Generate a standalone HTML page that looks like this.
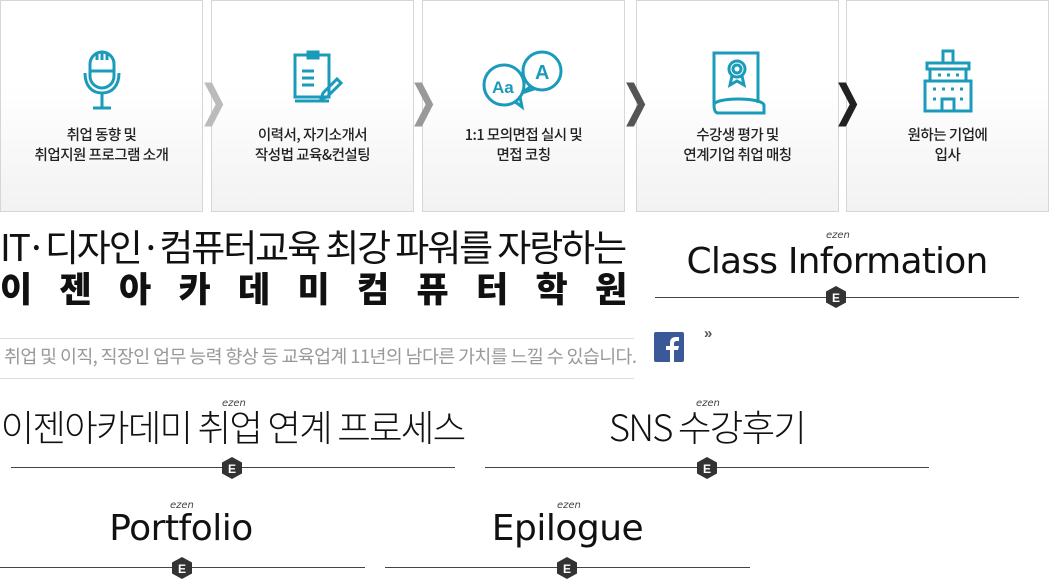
<!DOCTYPE html>
<html><head><meta charset="utf-8"><style>
*{margin:0;padding:0;box-sizing:border-box}
body{width:1049px;height:583px;background:#fff;position:relative;overflow:hidden;font-family:"Liberation Sans","Noto Sans CJK KR",sans-serif;color:#111}
.a{position:absolute}
.box{position:absolute;top:0;width:203px;height:212px;border:1px solid #d6d6d6;background:linear-gradient(#fff 40%,#f2f2f2)}
.box .t{position:absolute;top:124px;left:0;width:100%;text-align:center;font-size:14.5px;line-height:20px;color:#222;font-weight:500;font-family:"Noto Sans CJK KR",sans-serif;letter-spacing:-0.5px}
.box svg{position:absolute;left:50%;top:48px;transform:translateX(-50%)}
.chev{position:absolute;top:80px;font-size:44px;font-family:"DejaVu Sans",sans-serif;line-height:44px;transform:scaleX(0.8);font-weight:bold}
.k{font-family:"Noto Sans CJK KR",sans-serif}
.ttl{position:absolute;text-align:center;font-weight:300;color:#111;white-space:nowrap}
.ez{position:absolute;font-size:10px;font-style:italic;color:#444;font-family:"DejaVu Sans",sans-serif}
.ln{position:absolute;height:1px;background:#444}
.bd{position:absolute;width:20px;height:22px}
</style></head><body>

<div class="box" style="left:0">
<svg width="40" height="64" viewBox="0 0 40 64" fill="none" stroke="#1b9bba" stroke-width="3"><rect x="8" y="3" width="24" height="36" rx="12"/><path d="M8 22h24M15 5v6M20 4v7M25 5v6"/><path d="M3 24c0 13 7 20 17 20s17-7 17-20"/><path d="M20 44v14M11 59h18"/></svg>
<div class="t">취업 동향 및<br>취업지원 프로그램 소개</div></div>
<div class="box" style="left:211px">
<svg width="60" height="60" viewBox="0 0 60 60" fill="none" stroke="#1b9bba" stroke-width="3"><path d="M12 6h34v42H12z"/><rect x="25" y="3" width="10" height="6"/><path d="M12 52h34M19 22h12M19 29h12M19 36h12"/><path d="M40 44l14-14 4 4-14 14-6 2z"/></svg>
<div class="t">이력서, 자기소개서<br>작성법 교육&amp;컨설팅</div></div>
<div class="box" style="left:422px">
<svg width="84" height="64" viewBox="0 0 84 64" fill="none" stroke="#1b9bba" stroke-width="3"><circle cx="22" cy="36" r="20"/><path d="M32 52l8 6-2-10"/><circle cx="60" cy="22" r="19"/><path d="M48 38l-8 6 12-4"/><text x="10" y="44" font-size="17" fill="#1b9bba" stroke="none" font-weight="bold" font-family="Liberation Sans">Aa</text><text x="53" y="30" font-size="20" fill="#1b9bba" stroke="none" font-weight="bold" font-family="Liberation Sans">A</text></svg>
<div class="t">1:1 모의면접 실시 및<br>면접 코칭</div></div>
<div class="box" style="left:636px">
<svg width="56" height="68" viewBox="0 0 56 68" fill="none" stroke="#1b9bba" stroke-width="3"><path d="M4 56V4h44v50"/><path d="M4 56c0-8 48-8 50 0v8H8c-3 0-4-4-4-8z"/><circle cx="27" cy="20" r="8"/><circle cx="27" cy="20" r="4"/><path d="M22 27l-2 9 7-4 7 4-2-9"/></svg>
<div class="t">수강생 평가 및<br>연계기업 취업 매칭</div></div>
<div class="box" style="left:846px">
<svg width="50" height="64" viewBox="0 0 50 64" fill="none" stroke="#1b9bba" stroke-width="3"><path d="M20 2h10v12H20z"/><path d="M4 14h42v6H4z"/><path d="M7 20v12M43 20v12"/><path d="M2 32h46v30H2z"/><path d="M19 62V50h12v12" /><g stroke-width="3"><path d="M15 26h3M24 26h3M33 26h3M10 40h3M19 40h3M28 40h3M37 40h3M10 50h3M37 50h3"/></g></svg>
<div class="t">원하는 기업에<br>입사</div></div>

<div class="chev" style="left:195px;color:#bbb">❯</div>
<div class="chev" style="left:405px;color:#999">❯</div>
<div class="chev" style="left:617px;color:#555">❯</div>
<div class="chev" style="left:829px;color:#222">❯</div>

<div class="a k" style="left:0;top:220px;font-size:37px;letter-spacing:-2.1px;font-weight:400;white-space:nowrap;line-height:50px">IT·디자인·컴퓨터교육 최강 파워를 자랑하는</div>
<div class="a k" style="left:0;top:264px;font-size:35px;font-weight:900;letter-spacing:27.3px;white-space:nowrap;line-height:48px">이젠아카데미컴퓨터학원</div>
<div class="a" style="left:0;top:338px;width:634px;height:1px;background:#ddd"></div>
<div class="a" style="left:0;top:378px;width:634px;height:1px;background:#ddd"></div>
<div class="a k" style="left:4px;top:343px;font-size:18.4px;color:#999;white-space:nowrap;letter-spacing:-0.6px;font-weight:400">취업 및 이직, 직장인 업무 능력 향상 등 교육업계 11년의 남다른 가치를 느낄 수 있습니다.</div>

<svg class="a" style="left:654px;top:332px" width="30" height="30"><rect width="30" height="30" rx="2" fill="#3b5998"/><path d="M16 30V18h-4v-4h4v-3c0-4 2-6 6-6h3v4h-2c-2 0-3 1-3 2.5V14h5l-1 4h-4v12z" fill="#fff"/></svg>
<div class="a" style="left:704px;top:325px;font-size:15px;color:#555;font-weight:bold">»</div>

<div class="ez" style="left:826px;top:230px">ezen</div>
<div class="ttl" style="left:655px;width:364px;top:237px;font-size:36px;line-height:50px;font-family:'DejaVu Sans',sans-serif;font-weight:normal;letter-spacing:-0.8px">Class Information</div>
<div class="ln" style="left:655px;width:364px;top:297px"></div>

<div class="ez" style="left:222px;top:398px">ezen</div>
<div class="ttl k" style="left:0;width:465px;top:400px;font-size:36.5px;line-height:52px;letter-spacing:-1.8px">이젠아카데미 취업 연계 프로세스</div>
<div class="ln" style="left:11px;width:444px;top:467px"></div>

<div class="ez" style="left:696px;top:398px">ezen</div>
<div class="ttl k" style="left:485px;width:444px;top:400px;font-size:36.5px;line-height:52px;letter-spacing:-1.8px">SNS 수강후기</div>
<div class="ln" style="left:485px;width:444px;top:467px"></div>

<div class="ez" style="left:170px;top:500px">ezen</div>
<div class="ttl" style="left:0;width:362px;top:504px;font-size:36px;line-height:50px;font-family:'DejaVu Sans',sans-serif;font-weight:normal;letter-spacing:-0.5px">Portfolio</div>
<div class="ln" style="left:0;width:365px;top:567px"></div>

<div class="ez" style="left:557px;top:500px">ezen</div>
<div class="ttl" style="left:385px;width:365px;top:504px;font-size:36px;line-height:50px;font-family:'DejaVu Sans',sans-serif;font-weight:normal;letter-spacing:-0.5px">Epilogue</div>
<div class="ln" style="left:385px;width:365px;top:567px"></div>

<svg class="bd" style="left:826px;top:286px" viewBox="0 0 20 22"><path d="M10 0l10 5.5v11L10 22 0 16.5v-11z" fill="#333"/><text x="10" y="16" text-anchor="middle" font-size="12" font-weight="bold" fill="#fff" font-family="Liberation Sans">E</text></svg>
<svg class="bd" style="left:222px;top:457px" viewBox="0 0 20 22"><path d="M10 0l10 5.5v11L10 22 0 16.5v-11z" fill="#333"/><text x="10" y="16" text-anchor="middle" font-size="12" font-weight="bold" fill="#fff" font-family="Liberation Sans">E</text></svg>
<svg class="bd" style="left:697px;top:457px" viewBox="0 0 20 22"><path d="M10 0l10 5.5v11L10 22 0 16.5v-11z" fill="#333"/><text x="10" y="16" text-anchor="middle" font-size="12" font-weight="bold" fill="#fff" font-family="Liberation Sans">E</text></svg>
<svg class="bd" style="left:172px;top:557px" viewBox="0 0 20 22"><path d="M10 0l10 5.5v11L10 22 0 16.5v-11z" fill="#333"/><text x="10" y="16" text-anchor="middle" font-size="12" font-weight="bold" fill="#fff" font-family="Liberation Sans">E</text></svg>
<svg class="bd" style="left:557px;top:557px" viewBox="0 0 20 22"><path d="M10 0l10 5.5v11L10 22 0 16.5v-11z" fill="#333"/><text x="10" y="16" text-anchor="middle" font-size="12" font-weight="bold" fill="#fff" font-family="Liberation Sans">E</text></svg>
</body></html>
